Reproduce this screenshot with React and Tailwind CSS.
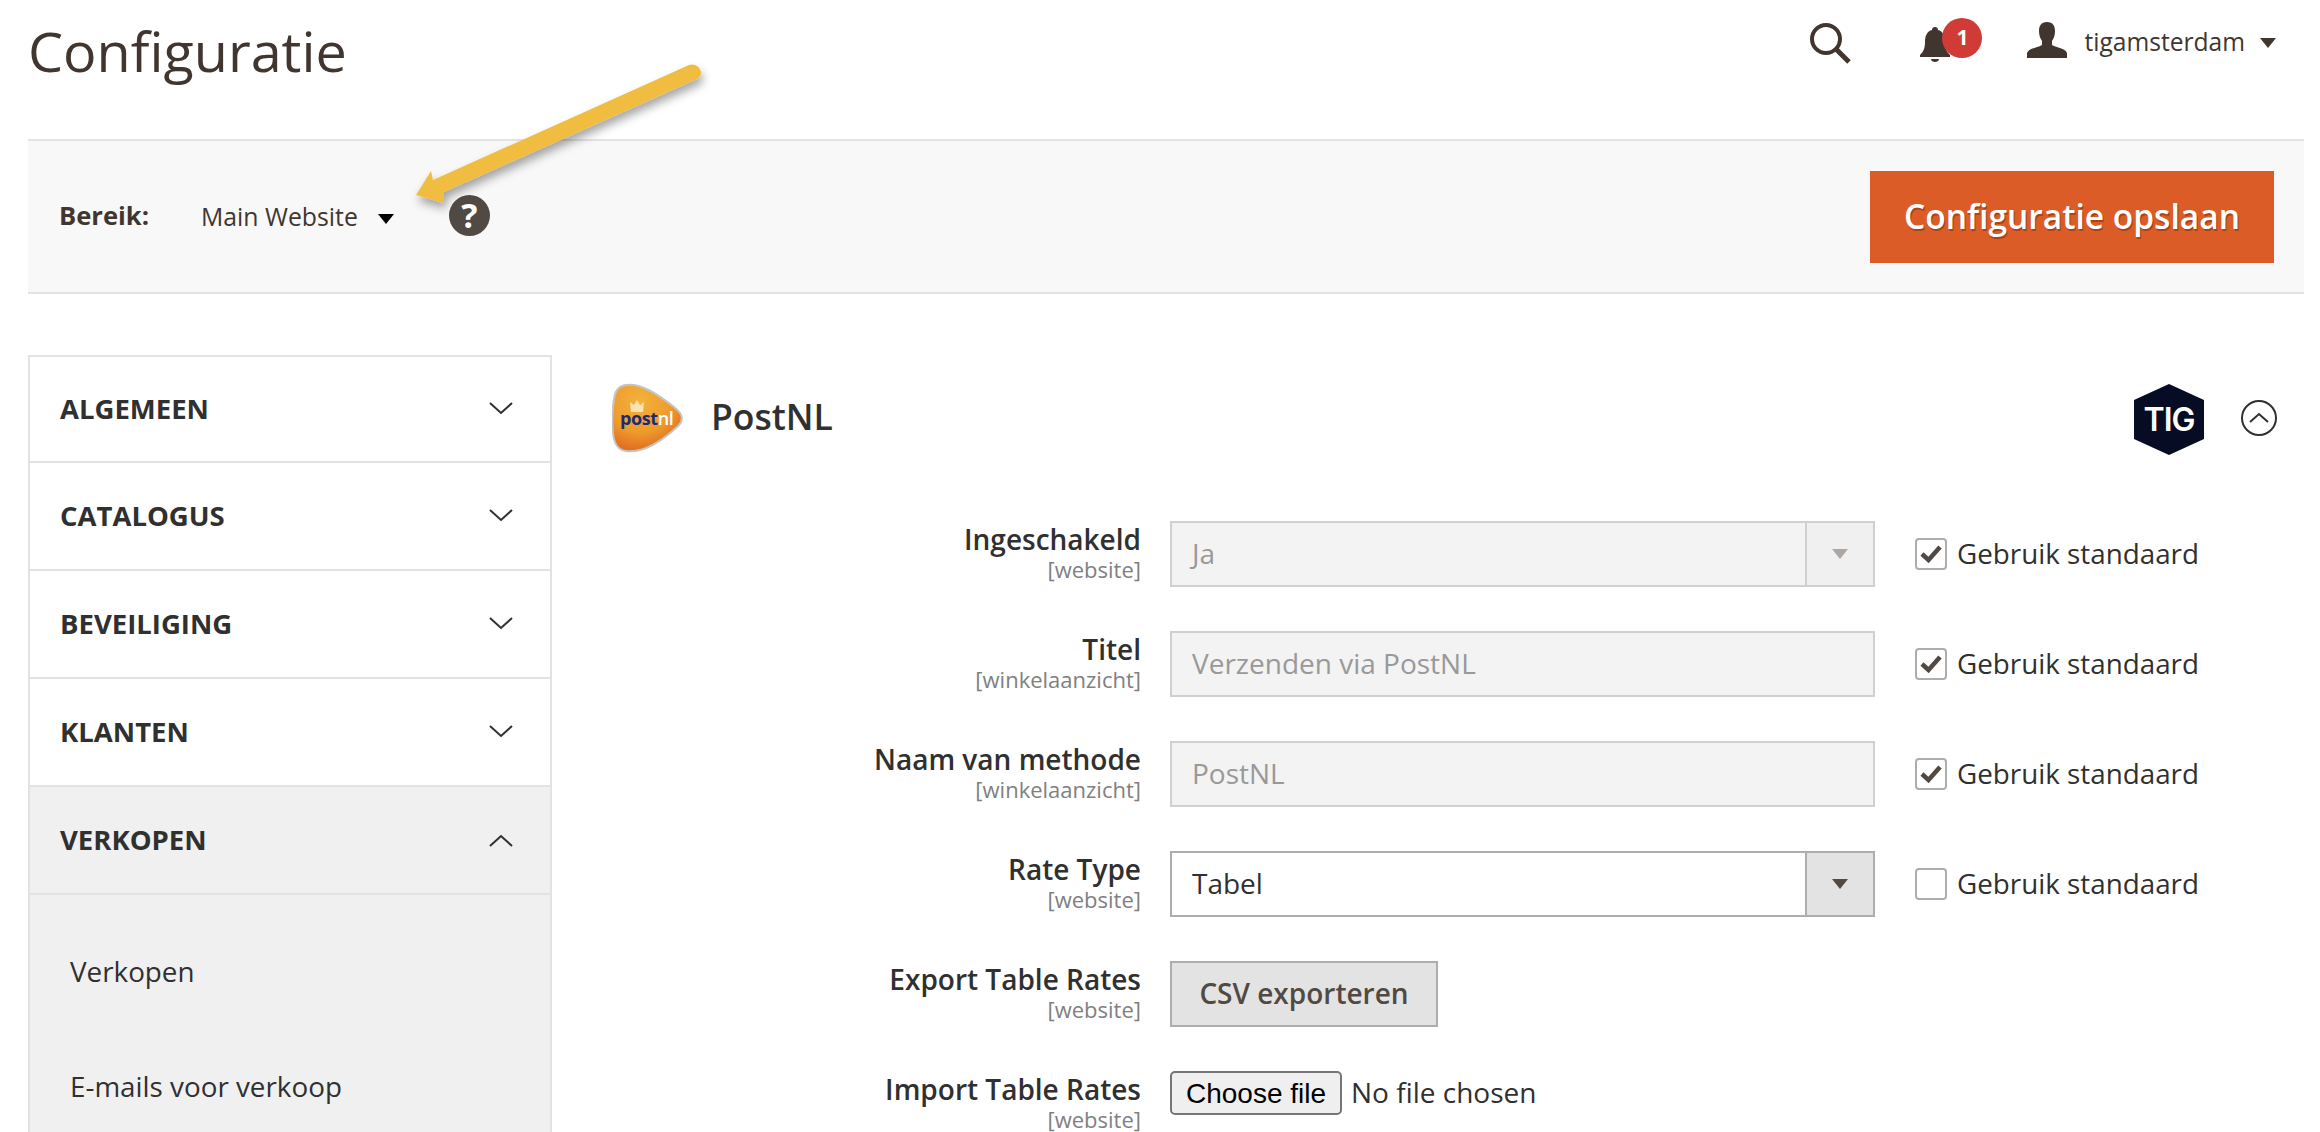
const openSans = { fontFamily: '"Open Sans", sans-serif' };

const Chevron = ({ up }) => (
  <svg width="24" height="14" viewBox="0 0 24 14" fill="none" stroke="#303030" strokeWidth="2">
    <polyline points={up ? '1,13 12,3 23,13' : '1,1 12,11 23,1'} />
  </svg>
);

const Caret = ({ className, w = 16, h = 10 }) => (
  <svg width={w} height={h} viewBox="0 0 16 10" className={className}>
    <polygon points="0,0 16,0 8,10" fill="currentColor" />
  </svg>
);

const Check = () => (
  <svg width="22" height="18" viewBox="0 0 22 18" fill="none" stroke="#514943" strokeWidth="4.5">
    <polyline points="2,9 8.5,15 20,2" />
  </svg>
);

const PostNLLogo = () => (
  <svg width="72" height="70" viewBox="0 0 72 70">
    <defs>
      <radialGradient id="pnl" cx="40%" cy="25%" r="85%">
        <stop offset="0%" stopColor="#f3b23c" />
        <stop offset="55%" stopColor="#ee9a2c" />
        <stop offset="100%" stopColor="#dd5c1e" />
      </radialGradient>
    </defs>
    <path
      d="M14 2 C28 0 44 10 62 24 C71 31 72 37 66 43 C48 60 30 70 14 68 C5 67 2 60 1 50 C0 40 0 28 2 16 C3 8 7 3 14 2 Z"
      fill="url(#pnl)"
      stroke="#c4c4c4"
      strokeWidth="2"
    />
    <path d="M19 29 L18 19 L22 22 L25 17 L28 22 L32 19 L31 29 Z" fill="#fbe3b4" />
    <text x="8" y="42" fontFamily="Open Sans, sans-serif" fontWeight="700" fontSize="18" letterSpacing="-0.4" fill="#1a2a78">
      post
      <tspan fill="#fff" fontWeight="600">nl</tspan>
    </text>
  </svg>
);

const TigLogo = () => (
  <svg width="70" height="71" viewBox="0 0 70 71" className="mt-[2px]">
    <polygon points="35,0 70,16 70,55 35,71 0,55 0,16" fill="#050c24" />
    <text x="35" y="47" textAnchor="middle" fontFamily="Inter, sans-serif" fontWeight="600" fontSize="32" letterSpacing="-1" fill="#fff">
      TIG
    </text>
  </svg>
);

const SideItem = ({ title, active }) => (
  <div className={`flex items-center justify-between h-[108px] pl-[30px] pr-[37px] border-b-2 first:border-t-2 border-[#e3e3e3] ${active ? 'bg-[#f0f0f0]' : 'bg-white'}`}>
    <span className="text-[27.5px] font-bold text-[#303030]">{title}</span>
    <Chevron up={active} />
  </div>
);

const DefaultCheck = ({ checked }) => (
  <div className="flex items-center gap-[10px] ml-[40px]">
    <div className="w-[32px] h-[32px] rounded-[4px] border-2 border-[#adadad] bg-white flex items-center justify-center">
      {checked && <Check />}
    </div>
    <span className="text-[27.8px] text-[#303030]">Gebruik standaard</span>
  </div>
);

const Row = ({ label, scope, children }) => (
  <div className="flex mb-[44px] h-[66px]">
    <div className="w-[529px] mr-[29px] -mt-[1px] text-right shrink-0">
      <div className="text-[28px] leading-[38px] font-semibold text-[#303030]">{label}</div>
      <div className="text-[22px] leading-[22px] text-[#808080]">{scope}</div>
    </div>
    {children}
  </div>
);

const TextField = ({ value }) => (
  <div className="w-[705px] h-[66px] flex items-center px-[20px] pb-[2px] bg-[#f3f3f3] border-2 border-[#d0d0d0] text-[28px] text-[#999999]">
    {value}
  </div>
);

const SelectField = ({ value, disabled }) => (
  <div className={`w-[705px] h-[66px] flex items-stretch border-2 text-[28px] ${disabled ? 'bg-[#f3f3f3] border-[#d0d0d0] text-[#999999]' : 'bg-white border-[#adadad] text-[#303030]'}`}>
    <div className="flex-1 flex items-center px-[20px] pb-[2px]">{value}</div>
    <div className={`w-[68px] flex items-center justify-center border-l-2 ${disabled ? 'bg-[#f0f0f0] border-[#d0d0d0] text-[#aca7a2]' : 'bg-[#e3e3e3] border-[#adadad] text-[#514943]'}`}>
      <Caret />
    </div>
  </div>
);

export default function App() {
  return (
    <div className="relative w-[2320px] h-[1132px] overflow-hidden bg-white text-[#41362f]" style={openSans}>
      {/* top bar */}
      <div className="h-[139px] flex justify-between pl-[28px] pr-[44px]">
        <h1 className="text-[55.7px] leading-[101px] font-normal">Configuratie</h1>
        <div className="flex items-start pt-[18px]">
          <svg width="42" height="42" viewBox="0 0 42 42" fill="none" stroke="#41362f" className="mt-[4px]">
            <circle cx="17" cy="17" r="14" strokeWidth="4" />
            <line x1="27" y1="27" x2="40" y2="40" strokeWidth="5" />
          </svg>
          <div className="relative w-[62px] ml-[69px] h-[44px]">
            <svg width="30" height="36" viewBox="0 0 30 36" className="absolute left-0 top-[9px]">
              <path d="M15 0 C17 0 18 1 18 3 C23 4 25 9 25 15 C25 22 27 25 30 28 L30 30 L0 30 L0 28 C3 25 5 22 5 15 C5 9 7 4 12 3 C12 1 13 0 15 0 Z M11 32 L19 32 C19 34 17 35 15 35 C13 35 11 34 11 32 Z" fill="#41362f" />
            </svg>
            <span className="absolute left-[22px] top-0 w-[40px] h-[40px] rounded-full bg-[#d13b36] text-white text-[21px] font-bold flex items-center justify-center">1</span>
          </div>
          <svg width="40" height="36" viewBox="0 0 40 36" className="ml-[45px] mt-[4px]">
            <path d="M20 0 C26 0 28 4 28 9 C28 13 27 16 25 19 L25 23 C30 26 38 26 40 31 L40 36 L0 36 L0 31 C2 26 10 26 15 23 L15 19 C13 16 12 13 12 9 C12 4 14 0 20 0 Z" fill="#41362f" />
          </svg>
          <span className="ml-[17px] text-[24.6px] leading-[48px]">tigamsterdam</span>
          <Caret className="ml-[15px] mt-[20px]" />
        </div>
      </div>

      {/* scope bar */}
      <div className="ml-[28px] mr-[16px] h-[155px] bg-[#f8f8f8] border-y-2 border-[#e3e3e3] flex items-center justify-between pl-[31px] pr-[30px]">
        <div className="flex items-center">
          <span className="text-[25.6px] font-bold w-[142px]">Bereik:</span>
          <span className="text-[24.8px]">Main Website</span>
          <Caret className="ml-[20px] mt-[4px] text-black" />
          <span className="ml-[55px] mb-[2px] w-[41px] h-[41px] rounded-full bg-[#514943] text-white text-[34px] font-bold flex items-center justify-center">?</span>
        </div>
        <button className="w-[404px] h-[92px] bg-[#db5c26] text-white text-[33.5px] font-semibold [text-shadow:1px_2px_0_#a8431a]">
          Configuratie opslaan
        </button>
      </div>

      {/* content */}
      <div className="flex pt-[61px] pl-[28px]">
        <div className="w-[524px] shrink-0 border-x-2 border-[#e3e3e3] bg-[#f0f0f0] h-[900px]">
          <SideItem title="ALGEMEEN" />
          <SideItem title="CATALOGUS" />
          <SideItem title="BEVEILIGING" />
          <SideItem title="KLANTEN" />
          <SideItem title="VERKOPEN" active />
          <div className="pt-[19px] pl-[40px] text-[27.8px] text-[#303030]">
            <div className="h-[115px] flex items-center">Verkopen</div>
            <div className="h-[115px] flex items-center">E-mails voor verkoop</div>
          </div>
        </div>

        <div className="flex-1 pl-[60px]">
          <div className="flex items-center h-[124px] pt-[2px] pr-[43px]">
            <PostNLLogo />
            <span className="ml-[27px] text-[35.5px] font-semibold text-[#303030] flex-1 pb-[3px]">PostNL</span>
            <TigLogo />
            <svg width="36" height="36" viewBox="0 0 36 36" fill="none" stroke="#303030" strokeWidth="2" className="ml-[37px]">
              <circle cx="18" cy="18" r="17" />
              <polyline points="9,22 18,14 27,22" />
            </svg>
          </div>

          <div className="pt-[42px]">
            <Row label="Ingeschakeld" scope="[website]">
              <SelectField value="Ja" disabled />
              <DefaultCheck checked />
            </Row>
            <Row label="Titel" scope="[winkelaanzicht]">
              <TextField value="Verzenden via PostNL" />
              <DefaultCheck checked />
            </Row>
            <Row label="Naam van methode" scope="[winkelaanzicht]">
              <TextField value="PostNL" />
              <DefaultCheck checked />
            </Row>
            <Row label="Rate Type" scope="[website]">
              <SelectField value="Tabel" />
              <DefaultCheck />
            </Row>
            <Row label="Export Table Rates" scope="[website]">
              <button className="w-[268px] h-[66px] pb-[2px] bg-[#e3e3e3] border-2 border-[#adadad] text-[28px] font-semibold text-[#514943]">
                CSV exporteren
              </button>
            </Row>
            <Row label="Import Table Rates" scope="[website]">
              <div className="flex items-center h-[44px]">
                <button className="w-[172px] h-[44px] pb-[1px] rounded-[5px] bg-[#efefef] border-2 border-[#767676] text-[28px] text-black" style={{ fontFamily: '"Liberation Sans", sans-serif' }}>
                  Choose file
                </button>
                <span className="ml-[9px] pb-[2px] text-[28px] text-[#303030]">No file chosen</span>
              </div>
            </Row>
          </div>
        </div>
      </div>

      {/* annotation arrow */}
      <svg className="absolute left-0 top-0 pointer-events-none" width="720" height="230" viewBox="0 0 720 230">
        <defs>
          <filter id="arrowShadow" x="-10%" y="-20%" width="120%" height="140%">
            <feDropShadow dx="2" dy="6" stdDeviation="5" floodColor="#000" floodOpacity="0.35" />
          </filter>
        </defs>
        <path
          d="M689 65 C694 63 700 66 701 72 C701 76 699 78 697 79 L444 192 L444 203 L416 195 L431 171 L433 180 Z"
          fill="#f0bd40"
          filter="url(#arrowShadow)"
        />
      </svg>
    </div>
  );
}
